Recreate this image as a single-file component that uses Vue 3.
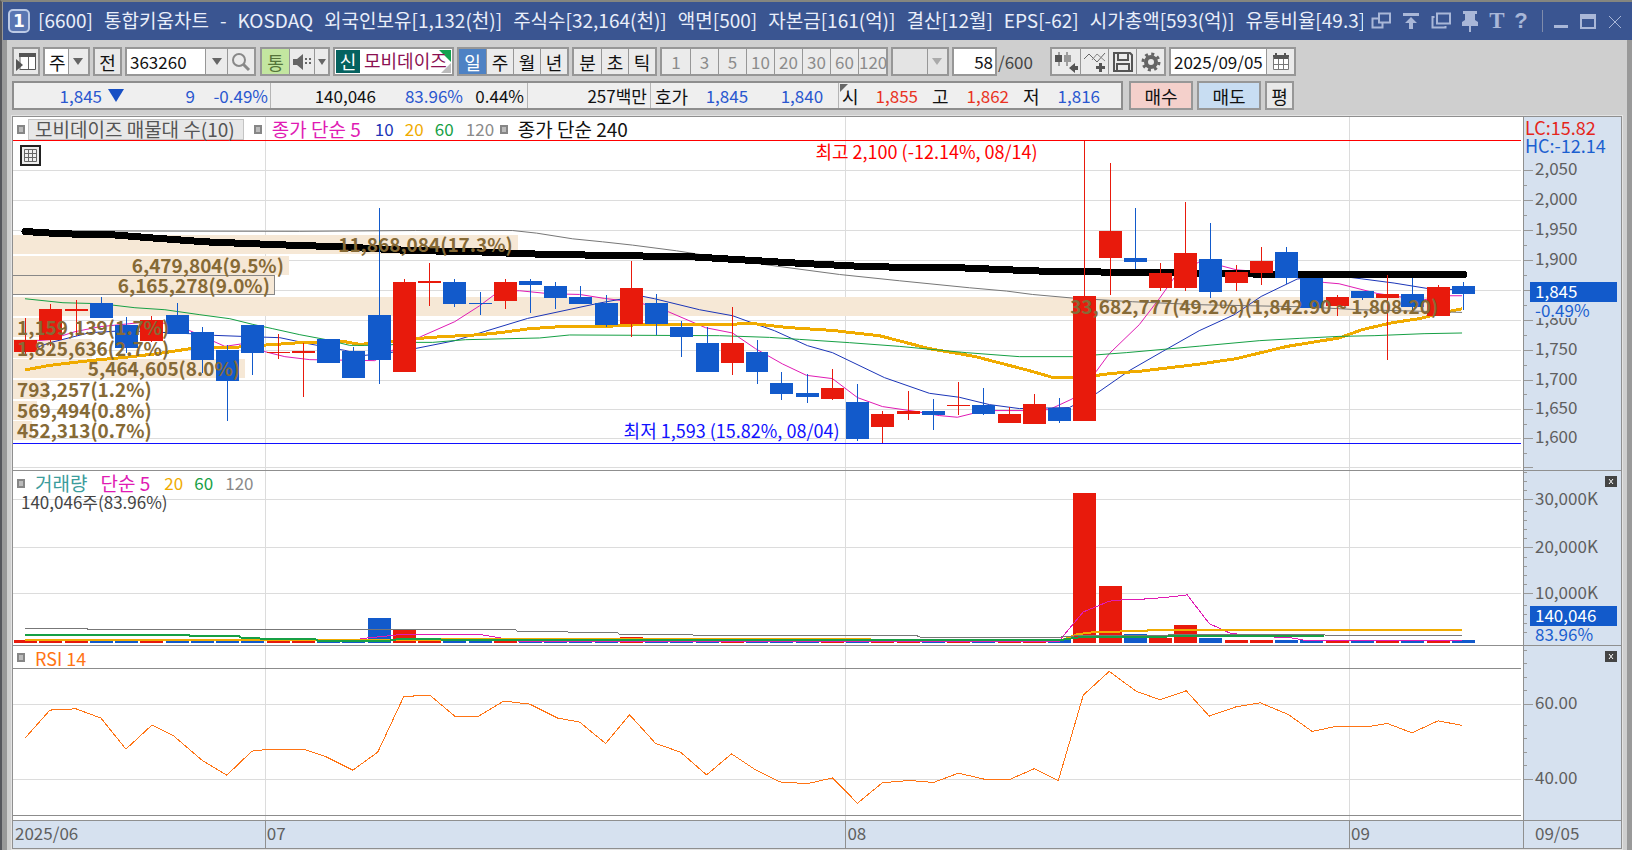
<script setup>
const X0 = 13
const W = 1511
const STEP = 25.24

const titleParts = [
  '[6600]', '통합키움차트', '-', 'KOSDAQ', '외국인보유[1,132(천)]', '주식수[32,164(천)]', '액면[500]',
  '자본금[161(억)]', '결산[12월]', 'EPS[-62]', '시가총액[593(억)]', '유통비율[49.3]'
]
const periods = ['일', '주', '월', '년']
const units = ['분', '초', '틱']
const minutes = [1, 3, 5, 10, 20, 30, 60, 120]

// [direction, body top, body bottom, high, low]
const candles = [
  ['r', 340, 352, 318, 356], ['r', 309, 340, 304, 346], ['r', 309, 311, 300, 336], ['b', 303, 318, 297, 318],
  ['b', 325, 348, 317, 353], ['r', 320, 341, 316, 342], ['b', 315, 334, 303, 334], ['b', 332, 360, 327, 373],
  ['b', 350, 381, 345, 421], ['b', 325, 353, 325, 375], ['r', 352, 353, 334, 359], ['r', 351, 353, 343, 397],
  ['b', 339, 363, 339, 363], ['b', 351, 378, 347, 378], ['b', 315, 360, 208, 384], ['r', 282, 372, 279, 372],
  ['r', 281, 283, 263, 306], ['b', 282, 304, 279, 307], ['b', 303, 304, 292, 315], ['r', 282, 301, 279, 309],
  ['b', 281, 285, 279, 313], ['b', 286, 298, 282, 309], ['b', 297, 304, 286, 304], ['b', 303, 325, 295, 327],
  ['r', 288, 324, 261, 337], ['b', 303, 324, 294, 335], ['b', 327, 337, 321, 357], ['b', 343, 372, 327, 372],
  ['r', 343, 363, 307, 375], ['b', 352, 372, 340, 384], ['b', 383, 394, 372, 400], ['b', 393, 397, 374, 403],
  ['r', 388, 399, 369, 400], ['b', 402, 439, 384, 441], ['r', 414, 427, 411, 443], ['r', 411, 414, 391, 420],
  ['b', 411, 415, 399, 430], ['r', 405, 406, 382, 415], ['b', 405, 414, 388, 415], ['r', 414, 423, 407, 423],
  ['r', 404, 424, 394, 424], ['b', 408, 421, 398, 423], ['r', 296, 421, 140, 421], ['r', 231, 258, 163, 295],
  ['b', 258, 262, 208, 269], ['r', 273, 288, 263, 291], ['r', 253, 288, 202, 291], ['b', 259, 292, 223, 298],
  ['r', 272, 283, 265, 291], ['r', 261, 273, 247, 285], ['b', 252, 278, 247, 284], ['b', 278, 308, 278, 308],
  ['r', 297, 306, 295, 316], ['b', 291, 298, 291, 300], ['r', 294, 298, 275, 360], ['b', 294, 307, 278, 313],
  ['r', 287, 316, 285, 316], ['b', 286, 294, 282, 310]
].map(([dir, top, bottom, high, low], i) => {
  const c = Math.round(25.2 + i * STEP)
  return { dir, top, bottom, high, low, c, x: c - 11 }
})

const volTop = { 14: 619, 15: 631, 24: 638, 42: 494, 43: 587, 44: 635, 45: 639, 46: 626, 47: 639, 48: 641, 49: 641, 50: 641 }
const volumes = candles.map((k, i) => ({ dir: k.dir, x: k.x, y: volTop[i] ?? 641 }))

const profile = [
  { w: 505, t: '11,868,084(17.3%)' }, { w: 276, t: '6,479,804(9.5%)' }, { w: 262, t: '6,165,278(9.0%)', current: true },
  { w: 1431, t: '33,682,777(49.2%)(1,842.90 ~ 1,808.20)' }, { w: 49, t: '1,159,139(1.7%)' }, { w: 79, t: '1,825,636(2.7%)' },
  { w: 232, t: '5,464,605(8.0%)' }, { w: 34, t: '793,257(1.2%)' }, { w: 24, t: '569,494(0.8%)' }, { w: 19, t: '452,313(0.7%)' }
].map((p, i) => ({ ...p, y: Math.round(235 + i * 20.7) }))

const ma = {
  ma120: '25,231 300,231.5 416,230.7 513,230.7 537,233.3 573,239 603,242 633,245.3 677,251 767,265 840,274.7 900,281 970,288 1007,291.3 1033,294.7 1073,298.3 1133,302 1200,305 1300,307 1360,310 1413,311.3 1463,312.7',
  ma240: '25,231.7 63,234 113,235 151,238 205,242 280,245 340,247 416,251 466,251.5 525,254 600,255.5 692,257 750,260.5 800,263.5 840,265.5 870,267 960,268 1020,270.5 1060,272 1150,272.5 1240,274 1300,275 1465,275',
  ma60: '25,299 63,303 101,304 135,308 165,310 200,315 230,319 253,324.7 273,329 300,335 325,339.7 350,345.7 385,345.7 416,342.7 433,342.7 466,340 540,338.3 570,335.3 720,336 770,337.7 800,339.7 850,343 900,346.7 967,353 1020,357 1073,357 1127,353 1200,346.5 1260,341 1300,338.7 1340,336.7 1375,336 1425,334 1463,333.3',
  ma20: '25,370.3 50,365.7 75,362.7 100,360 125,357.7 160,353.7 195,348.3 230,348 253,346.3 300,343 345,342 360,344.7 390,342.3 430,337.7 480,335 500,333 530,329 560,327 600,327 640,325 700,325 755,324 780,327 800,328.7 833,330.7 850,332.7 880,336 930,349 975,356.7 1030,371 1053,377.7 1082,378 1110,374 1140,371.7 1200,364.5 1237,359 1288,346.7 1340,338.3 1363,330 1393,323 1420,319 1450,311.7 1463,309',
  ma10: '25,352 50,343 75,336.7 90,333 125,331 190,334 215,335.7 250,337 280,338 310,344.3 345,350.7 365,355.7 390,353 415,349 455,341 480,333.3 528,318.7 600,303.3 640,296 655,299 700,310 733,316 755,324 775,331 808,346 833,353 885,378 930,393.7 960,397.7 990,405 1020,409 1070,408 1098,393.3 1130,371 1163,352 1200,331 1235,315 1262,296.7 1298,279.3 1330,275 1362,279 1395,283.3 1430,289 1463,290',
  ma5: '25,342 50,340 75,332 100,327 130,324 155,321 190,331 210,340 225,346.7 250,343 265,352 285,357 310,360 375,361 390,352 421,337 455,322 480,306 500,291 520,291 550,294 580,294.7 605,298.7 640,303 668,311.7 706,328 733,333.3 756,349 783,364.3 807,375.7 833,379 858,398 883,407 917,412 940,416 958,417.7 985,411 1025,411 1050,410 1073,399.3 1097,371.7 1110,354 1140,325 1160,299 1175,278 1200,262 1222,266 1237,270 1262,272 1290,276 1325,282.7 1340,284 1378,293.7 1400,297 1425,300 1450,296 1463,296'
}
const vma = {
  v120: '25,629.5 87,629.5 89,630.7 516,630.7 518,632 568,632.5 570,633.5 618,633.5 620,635 692,635 695,636.7 918,636.7 922,638.3 1055,638.3 1075,636.7 1150,636.5 1175,635.5 1325,635.5 1327,636.5 1463,636.5',
  v60: '25,635.3 188,635.3 190,636.7 239,637 241,638.3 265,639.5 316,640 318,641.3 390,641.3 400,639.7 440,640 445,641 1060,641 1080,638 1160,638 1175,636.5 1325,636.5',
  v20: '25,641.2 440,641.2 443,639.7 870,639.7 872,641 1062,641 1078,635 1098,632.5 1147,632 1150,630.5 1463,630.5',
  v5: '360,639.5 385,637 400,635.3 480,635.3 500,638.5 520,642 1060,642 1063,637.7 1084,612.7 1110,602 1123,600.7 1148,599.7 1168,598 1188,595.7 1210,624.3 1231,634 1254,636.7 1293,638.7 1307,641.3 1463,641.3'
}
const rsi = '25,738 50,710 76,708.7 101,718 126,749 152,725 174,736 202,760 227,775 252,751 265,749.5 305,749.5 325,756 353,770 378,752 404,696.5 430,695 455,716 479,716 504,701 530,704 558,718 580,722 606,743.3 630,714.7 656,743.3 681,752 707,774.7 732,753.7 755,769 780,781.7 808,783.5 833,777.7 858,803 883,782.5 910,780.3 934,782.3 959,773 985,779 1011,779 1035,768.5 1059,780.5 1084,695 1110,671.3 1137,691.3 1161,699.7 1187,690.7 1210,716 1237,706.7 1261,702.7 1289,714.3 1313,731.3 1335,726.7 1368,726.7 1388,723.3 1413,732.7 1439,720.7 1463,725.3'

const pane = {
  price: { y: 117, h: 354 },
  volume: { y: 472, h: 173 },
  rsi: { y: 646, h: 174 }
}
const priceGrid = [170, 200, 230, 260, 290, 320, 350, 380, 409, 438, 468]
const priceLabels = ['2,050', '2,000', '1,950', '1,900', '1,850', '1,800', '1,750', '1,700', '1,650', '1,600']
const priceMinor = [185, 215, 245, 275, 305, 335, 365, 394, 424, 453]
const volGrid = [500, 548, 594]
const volLabels = ['30,000K', '20,000K', '10,000K']
const volMinor = [473, 482, 491, 512, 521, 530, 539, 558, 567, 576, 585, 606, 615, 624, 633]
const rsiGrid = [704, 779]
const rsiLabels = ['60.00', '40.00']
const rsiMinor = [650, 663, 677, 690, 725, 738, 752, 765]
const months = [265, 846, 1350]
const monthLabels = [['07', 265], ['08', 846], ['09', 1350]]

const box = (p) => `${X0} ${p.y} ${W} ${p.h}`
const axisBox = (p) => `0 ${p.y} 97 ${p.h}`
const px = (x) => `${((x - X0) / W) * 100}%`
const py = (p, y) => `${((y - p.y) / p.h) * 100}%`
const labelStyle = (p) => ({
  top: py(pane.price, p.y + 9),
  right: p.w > 150 ? `${100 - (p.w / W) * 100}%` : 'auto',
  left: p.w > 150 ? 'auto' : '0'
})
</script>

<template>
  <div class="window">
    <header class="titlebar">
      <span class="badge">1</span>
      <h1 class="title"><span v-for="t in titleParts" :key="t">{{ t }}</span></h1>
      <div class="win-tools">
        <button type="button" aria-label="창 연결"><svg width="20" height="20"><path d="M8 2.5h11v9H8z M8 7.500H1.500v9h10V12" /></svg></button>
        <button type="button" aria-label="맨 위로"><svg width="18" height="20"><path class="fill" d="M1 2h16v3H1zM9 6l6 6h-4v6H7v-6H3z" /></svg></button>
        <button type="button" aria-label="창 복사"><svg width="20" height="20"><path d="M6 2.500h13v10H6z M3.500 6H1.500v10.500h13V15" /></svg></button>
        <button type="button" aria-label="고정"><svg width="18" height="22"><path class="fill" d="M2 1h14v3h-2v6l3 2v4H1v-4l3-2V4H2zM8 15h2v7H8z" /></svg></button>
        <button type="button" aria-label="글꼴" class="serif">T</button>
        <button type="button" aria-label="도움말" class="help">?</button>
        <i class="bar"></i>
        <button type="button" aria-label="최소화"><svg width="16" height="20"><path class="fill" d="M1 14h14v3H1z" /></svg></button>
        <button type="button" aria-label="최대화"><svg width="18" height="20"><path d="M2 4h14v13H2z" /><path class="fill" d="M1 3h16v5H1z" /></svg></button>
        <button type="button" aria-label="닫기"><svg width="14" height="20"><path class="thin" d="M1 5l12 12M13 5L1 17" /></svg></button>
      </div>
    </header>

    <div class="client">
      <div class="toolbar">
        <button type="button" class="btn w28" aria-label="패널 열기"><svg width="22" height="20"><path fill="#fff" d="M5 5h15v13H5z" /><path d="M5 17.500h15.500V2" fill="none" stroke="#555" /><path d="M5 4v14M13.500 4v13" stroke="#666" /><path fill="#555" d="M4 1h17v4H4zM1 7l7 6-7 6z" /></svg></button>
        <label class="combo w47"><select aria-label="종목 구분"><option>주</option></select><span class="arrow"></span></label>
        <button type="button" class="btn w29">전</button>
        <div class="group">
          <input class="code" aria-label="종목코드" value="363260" />
          <button type="button" class="cell w22" aria-label="최근 종목"><i class="tri"></i></button>
          <button type="button" class="cell w27" aria-label="종목 검색"><svg width="20" height="20"><circle cx="8" cy="8" r="6" fill="none" stroke="#888" stroke-width="2" /><path d="M12 12l6 6" stroke="#888" stroke-width="3" /></svg></button>
        </div>
        <div class="group speaker">
          <button type="button" class="cell green w27">통</button>
          <button type="button" class="cell w25" aria-label="소리"><svg width="20" height="20"><path fill="#666" d="M1 7h4l6-5v16l-6-5H1z" /><path stroke="#666" stroke-width="2" stroke-dasharray="2 2" d="M14 6v8M18 6v8" /></svg></button>
          <button type="button" class="cell w14" aria-label="소리 설정"><i class="tri small"></i></button>
        </div>
        <div class="group stock"><span class="new">신</span><span class="name">모비데이즈</span></div>
        <div class="group"><button v-for="(p, i) in periods" :key="p" type="button" class="cell w27" :class="{ on: i === 0 }">{{ p }}</button></div>
        <div class="group"><button v-for="p in units" :key="p" type="button" class="cell w27">{{ p }}</button></div>
        <div class="group mins"><button v-for="m in minutes" :key="m" type="button" class="cell w28 dim">{{ m }}</button></div>
        <label class="combo w58 off"><select aria-label="분 입력" disabled><option></option></select><span class="arrow"></span></label>
        <div class="count"><input id="bars" value="58" /><label for="bars">/600</label></div>
        <div class="group icons">
          <button type="button" class="cell w28" aria-label="봉 추가"><svg width="24" height="22"><path stroke="#555" d="M5 1v14M13 1v14" /><path fill="#555" d="M1 4h7v7H1zM15 17l6-5v3h3v4h-3v3z" /><path fill="#999" d="M10 4h7v7h-7z" /></svg></button>
          <button type="button" class="cell w28" aria-label="지표 추가"><svg width="24" height="22"><path fill="none" stroke="#666" d="M1 8l5-5 8 8 8-9" /><path fill="none" stroke="#888" d="M9 9l5-6 8 7" /><path fill="#555" d="M16 12h3v3h3v3h-3v3h-3v-3h-3v-3h3z" /></svg></button>
          <button type="button" class="cell w28" aria-label="저장"><svg width="22" height="22"><path fill="none" stroke="#555" stroke-width="2" d="M2 2h16l2 2v16H2zM6 2v7h10V2M5 20v-7h12v7" /></svg></button>
          <button type="button" class="cell w28" aria-label="설정"><svg width="20" height="20"><circle cx="10" cy="10" r="5" fill="none" stroke="#666" stroke-width="4" /><circle cx="10" cy="10" r="8" fill="none" stroke="#666" stroke-width="3" stroke-dasharray="3 3.280" /></svg></button>
        </div>
        <div class="group">
          <input class="date" aria-label="조회 일자" value="2025/09/05" />
          <button type="button" class="cell w28" aria-label="달력"><svg width="18" height="18"><path fill="#fff" d="M1 4h16v13H1z" /><path fill="#555" d="M1 2h16v4H1zM3 0h2v3H3zM12 0h2v3h-2z" /><path fill="none" stroke="#777" d="M1.500 4v12.500h15V4M6.500 6v10M11.500 6v10M1 11.500h16" /></svg></button>
        </div>
      </div>

      <div class="quote">
        <div class="strip">
          <div class="sec s1"><b class="blue c1">1,845</b><i class="down"></i><b class="blue c2">9</b><b class="blue c3">-0.49%</b></div>
          <div class="sec s2"><b class="c4">140,046</b><b class="blue c5">83.96%</b><b class="c6">0.44%</b></div>
          <div class="sec s3"><b>257백만</b></div>
          <div class="sec s4"><span>호가</span><b class="blue c7">1,845</b><b class="blue c8">1,840</b></div>
          <div class="sec s5"><span class="open">시</span><b class="red c7">1,855</b><span class="lbl">고</span><b class="red c9">1,862</b><span class="lbl">저</span><b class="blue c7">1,816</b></div>
        </div>
        <button type="button" class="btn buy">매수</button>
        <button type="button" class="btn sell">매도</button>
        <button type="button" class="btn w29">평</button>
      </div>

      <main class="chart">
        <section class="pane price">
          <div class="plot">
            <svg class="fit crisp" :viewBox="box(pane.price)" preserveAspectRatio="none" aria-hidden="true">
              <rect v-for="y in priceGrid" :key="y" class="grid" :x="X0" :y="y" width="1509" height="1" />
              <rect v-for="x in months" :key="x" class="grid" :x="x" y="117" width="1" height="355" />
              <rect v-for="p in profile" :key="p.y" :class="p.current ? 'prof cur' : 'prof'" :x="p.current ? X0 - 2 : X0" :y="p.y" :width="p.current ? p.w + 2 : p.w" height="19" />
              <polyline class="ln ma5" :points="ma.ma5" />
              <polyline class="ln ma10" :points="ma.ma10" />
              <polyline class="ln gold wide" :points="ma.ma20" />
              <polyline class="ln green-l" :points="ma.ma60" />
              <polyline class="ln gray" :points="ma.ma120" />
              <polyline class="ln black" :points="ma.ma240" />
              <g v-for="k in candles" :key="k.c" :class="k.dir">
                <rect :x="k.c" :y="k.high" width="1" :height="k.low - k.high" />
                <rect :x="k.x" :y="k.top" width="23" :height="k.bottom - k.top" />
              </g>
              <rect class="hi" :x="X0" y="140" width="1509" height="1" />
              <rect class="lo" :x="X0" y="443" width="1509" height="1" />
            </svg>
            <span v-for="p in profile" :key="p.t" class="prof-label" :style="labelStyle(p)">{{ p.t }}</span>
            <span class="note hi-note" :style="{ left: px(816), top: py(pane.price, 151) }">최고 2,100 (-12.14%, 08/14)</span>
            <span class="note lo-note" :style="{ left: px(624), top: py(pane.price, 430) }">최저 1,593 (15.82%, 08/04)</span>
            <div class="legend">
              <i class="sq"></i><span class="tag">모비데이즈 매물대 수(10)</span><i class="sq"></i>
              <span class="m5">종가 단순 5</span><span class="num m10">10</span><span class="num m20">20</span><span class="num m60">60</span><span class="num m120">120</span>
              <i class="sq"></i><span class="m240">종가 단순 240</span>
            </div>
            <button type="button" class="table-btn" aria-label="데이터 표"><svg width="21" height="21"><path fill="#eee" stroke="#222" stroke-width="2" d="M1 1h19v19H1z" /><path fill="none" stroke="#666" d="M4.500 4.500h12v12h-12zM8.500 4v13M12.500 4v13M4 8.500h13M4 12.500h13" /></svg></button>
          </div>
          <div class="axis">
            <svg class="fit crisp" :viewBox="axisBox(pane.price)" preserveAspectRatio="none" aria-hidden="true">
              <rect v-for="y in priceGrid" :key="y" x="0" :y="y" width="9" height="1" /><rect v-for="y in priceMinor" :key="y" x="0" :y="y" width="3" height="1" />
            </svg>
            <span v-for="(t, i) in priceLabels" :key="t" class="tick" :style="{ top: py(pane.price, priceGrid[i] - 2) }">{{ t }}</span>
            <span class="corner redtext" :style="{ top: py(pane.price, 127) }">LC:15.82</span>
            <span class="corner bluetext" :style="{ top: py(pane.price, 145) }">HC:-12.14</span>
            <span class="mark" :style="{ top: py(pane.price, 292) }">1,845</span>
            <span class="rate" :style="{ top: py(pane.price, 310) }">-0.49%</span>
          </div>
        </section>

        <section class="pane volume">
          <div class="plot">
            <svg class="fit crisp" :viewBox="box(pane.volume)" preserveAspectRatio="none" aria-hidden="true">
              <rect v-for="y in volGrid" :key="y" class="grid" :x="X0" :y="y" width="1509" height="1" />
              <rect v-for="x in months" :key="x" class="grid" :x="x" y="472" width="1" height="174" />
              <rect v-for="v in volumes" :key="v.x" :class="v.dir" :x="v.x" :y="v.y" width="23" :height="644 - v.y" />
              <polyline class="ln ma5" :points="vma.v5" />
              <polyline class="ln gold" :points="vma.v20" />
              <polyline class="ln green-l" :points="vma.v60" />
              <polyline class="ln gray" :points="vma.v120" />
            </svg>
            <div class="legend vol"><i class="sq"></i><span class="teal">거래량</span><span class="m5">단순 5</span><span class="num m20">20</span><span class="num m60">60</span><span class="num m120">120</span></div>
            <p class="vol-text">140,046주(83.96%)</p>
          </div>
          <div class="axis">
            <svg class="fit crisp" :viewBox="axisBox(pane.volume)" preserveAspectRatio="none" aria-hidden="true">
              <rect v-for="y in volGrid" :key="y" x="0" :y="y" width="9" height="1" /><rect v-for="y in volMinor" :key="y" x="0" :y="y" width="3" height="1" />
            </svg>
            <span v-for="(t, i) in volLabels" :key="t" class="tick" :style="{ top: py(pane.volume, volGrid[i] - 2) }">{{ t }}</span>
            <span class="mark" :style="{ top: py(pane.volume, 616) }">140,046</span>
            <span class="rate" :style="{ top: py(pane.volume, 634) }">83.96%</span>
            <button type="button" class="close" aria-label="거래량 닫기"><svg width="12" height="11"><path d="M4 3l4 5M8 3L4 8" stroke="#fff" /></svg></button>
          </div>
        </section>

        <section class="pane rsi">
          <div class="plot">
            <svg class="fit crisp" :viewBox="box(pane.rsi)" preserveAspectRatio="none" aria-hidden="true">
              <rect v-for="y in rsiGrid" :key="y" class="grid" :x="X0" :y="y" width="1509" height="1" />
              <rect v-for="x in months" :key="x" class="grid" :x="x" y="646" width="1" height="175" />
              <rect class="bound" :x="X0" y="668" width="1509" height="1" /><rect class="bound" :x="X0" y="815" width="1509" height="1" />
              <polyline class="ln orange" :points="rsi" />
            </svg>
            <div class="legend"><i class="sq"></i><span class="rsi-name">RSI 14</span></div>
          </div>
          <div class="axis">
            <svg class="fit crisp" :viewBox="axisBox(pane.rsi)" preserveAspectRatio="none" aria-hidden="true">
              <rect v-for="y in rsiGrid" :key="y" x="0" :y="y" width="9" height="1" /><rect v-for="y in rsiMinor" :key="y" x="0" :y="y" width="3" height="1" />
            </svg>
            <span v-for="(t, i) in rsiLabels" :key="t" class="tick" :style="{ top: py(pane.rsi, rsiGrid[i] - 2) }">{{ t }}</span>
            <button type="button" class="close" aria-label="RSI 닫기"><svg width="12" height="11"><path d="M4 3l4 5M8 3L4 8" stroke="#fff" /></svg></button>
          </div>
        </section>

        <footer class="dates">
          <div class="months">
            <span class="first">2025/06</span>
            <span v-for="m in monthLabels" :key="m[0]" class="month" :style="{ left: px(m[1]) }">{{ m[0] }}</span>
          </div>
          <div class="today">09/05</div>
        </footer>
      </main>
    </div>
  </div>
</template>

<style>
body { background: #999; }
</style>

<style scoped>
.window, .window * { box-sizing: border-box; }
.window {
  min-height: 100vh;
  display: flex;
  flex-direction: column;
  border-top: 2px solid #85867f;
  border-left: 2px solid #55565c;
  background: #999;
  color: #111;
  font: 18px/20px "Noto Sans CJK KR", sans-serif;
}
button, input, select { font: inherit; color: inherit; margin: 0; padding: 0; border: 0; background: none; border-radius: 0; }
svg { display: block; }

.titlebar { display: flex; align-items: center; height: 38px; margin-left: 1px; padding: 0 8px 0 5px; background: #3a5591; color: #e9eefa; }
.badge { flex: none; width: 22px; height: 24px; border: 2px solid #bccae6; border-radius: 5px; background: #5a76b2; text-align: center; font: bold 17px/20px "DejaVu Sans", sans-serif; color: #fff; }
.title { flex: 1; display: flex; gap: 11px; min-width: 0; margin: 0 3px 2px 8px; overflow: hidden; white-space: nowrap; font-size: 19px; font-weight: normal; line-height: 32px; }
.title span { flex: none; }
.win-tools { flex: none; display: grid; grid-template-columns: 30px 30px 30px 28px 26px 22px 20px 18px 36px 18px; align-items: center; justify-items: center; color: #a9b7d8; }
.win-tools path { fill: none; stroke: #a9b7d8; stroke-width: 2; }
.win-tools .fill { fill: #a9b7d8; stroke: none; }
.win-tools .thin { stroke-width: 1; }
.serif { font: bold 23px/24px "Liberation Serif", serif; }
.help { font: bold 22px/24px "Liberation Sans", sans-serif; }
.bar { width: 1px; height: 22px; background: #7f8cab; }

.client { flex: 1; display: flex; flex-direction: column; margin: 0 5px 0 5px; padding: 7px 5px 1px; background: #cfcfcf; }
.toolbar { display: flex; align-items: stretch; gap: 3px; height: 29px; }
.btn, .group, .combo { flex: none; border: 2px solid #979797; background: #e9e9e9; }
.btn { display: grid; place-items: center; }
.group { display: flex; }
.cell { display: grid; place-items: center; border-left: 1px solid #979797; background: #ebebeb; }
.cell:first-child { border-left: 0; }
.w14 { width: 14px; }
.w22 { width: 22px; }
.w25 { width: 25px; }
.w27 { width: 27px; }
.w28 { width: 28px; }
.w29 { width: 29px; }
.w47 { width: 47px; }
.w58 { width: 58px; }
.on { background: #4e82c4; color: #fff; }
.dim { color: #8b8b8b; font-size: 17px; }
.green { background: #c3e6a0; color: #55753b; }
.combo { display: flex; position: relative; background: #fff; }
.combo select { flex: 1; width: 100%; appearance: none; padding-left: 4px; outline: 0; opacity: 1; }
.arrow { position: absolute; top: 0; right: 0; bottom: 0; width: 20px; border-left: 1px solid #979797; background: #ebebeb; }
.arrow::after, .tri { content: ""; display: block; width: 0; border: 5px solid transparent; border-top: 7px solid #666; border-bottom: 0; }
.arrow::after { margin: 9px 0 0 4px; }
.tri.small { border-width: 6px 4px 0; }
.off { background: #e4e4e4; }
.off .arrow { background: #e4e4e4; }
.off .arrow::after { border-top-color: #aaa; }
.code { width: 78px; padding-left: 3px; background: #fff; font-size: 17px; }
.speaker { margin-left: 1px; background: #ebebeb; }
.stock { position: relative; width: 121px; background: #fff; overflow: hidden; }
.stock::before { content: ""; position: absolute; top: 1px; right: 1px; border: 6px solid #12a350; border-left-color: transparent; border-bottom-color: transparent; }
.stock::after { content: ""; position: absolute; bottom: 1px; right: 1px; border: 5px solid #bbb; border-left-color: transparent; border-top-color: transparent; }
.new { width: 24px; margin: 1px; background: #056260; color: #fff; text-align: center; line-height: 23px; }
.name { position: relative; z-index: 1; padding-left: 3px; color: #8b1152; line-height: 23px; }
.count { display: flex; align-items: center; width: 95px; color: #444; font-size: 17px; }
.count input { width: 45px; height: 29px; padding-right: 2px; border: 2px solid #979797; background: #fff; text-align: right; color: #111; }
.count label { padding-left: 1px; }
.date { width: 95px; padding-left: 3px; background: #fff; font-size: 17px; }

.quote { display: flex; height: 29px; margin-top: 5px; gap: 4px; }
.quote b { font-weight: normal; text-align: right; font-size: 17px; }
.strip { flex: none; display: flex; width: 1111px; margin-right: 2px; border: 2px solid #8e8e8e; background: #efefef; }
.sec { display: flex; align-items: center; border-right: 1px solid #b5b5b5; }
.sec:last-child { border-right: 0; }
.s1 { width: 257px; } .s2 { width: 257px; } .s3 { width: 123px; justify-content: flex-end; padding-right: 3px; }
.s4 { width: 188px; padding-left: 4px; } .s5 { flex: 1; position: relative; padding-left: 3px; }
.s5::before { content: ""; position: absolute; top: 1px; left: 1px; border: 4px solid #666; border-right-color: transparent; border-bottom-color: transparent; }
.c1 { width: 88px; } .c2 { width: 71px; } .c3 { width: 73px; }
.c4 { width: 105px; } .c5 { width: 87px; } .c6 { width: 61px; }
.c7 { width: 60px; } .c8 { width: 75px; } .c9 { width: 60px; }
.open { width: 16px; } .lbl { width: 31px; padding-left: 14px; }
.down { margin-left: 6px; border: 8px solid transparent; border-top: 13px solid #174fc4; border-bottom: 0; }
.blue { color: #2a57cf; } .red { color: #e93323; }
.buy { width: 64px; background: #f4d0cb; }
.sell { width: 64px; background: #c8ddf2; }

.chart { flex: 1; display: flex; flex-direction: column; min-height: 600px; margin-top: 6px; border: 1px solid #8f8f8f; outline: 1px solid #e3e3e3; background: #fff; }
.pane { display: flex; position: relative; border-bottom: 1px solid #8f8f8f; }
.price { flex: 355 1 0; } .volume { flex: 174 1 0; } .rsi { flex: 175 1 0; }
.plot { flex: 1; position: relative; min-width: 0; overflow: hidden; }
.axis { flex: none; position: relative; width: 98px; border-left: 1px solid #8f8f8f; background: #d6e1ef; color: #5f5f5f; font-size: 17px; }
.axis rect { fill: #999; }
.fit { position: absolute; inset: 0; width: 100%; height: 100%; }
.crisp { shape-rendering: crispEdges; }
.grid { fill: #dcdcdc; }
.prof { fill: #f6e8d6; }
.cur { stroke: #888; }
.ln { fill: none; stroke-width: 1; stroke-linejoin: round; vector-effect: non-scaling-stroke; }
.ma5 { stroke: #e01bb4; }
.ma10 { stroke: #1b35b8; }
.gold { stroke: #f0ab00; stroke-width: 2; }
.wide { stroke-width: 3; }
.green-l { stroke: #16a045; }
.volume .green-l { stroke-width: 2; }
.gray { stroke: #777; }
.black { stroke: #000; stroke-width: 7; stroke-linecap: round; }
.orange { stroke: #ff7414; }
.r { fill: #e81a0c; } .b { fill: #125acb; }
.hi { fill: #f00; } .lo { fill: #11f; }
.bound { fill: #8c8c8c; }
.prof-label, .note, .tick, .corner, .mark, .rate { position: absolute; transform: translateY(-50%); white-space: nowrap; }
.prof-label { padding: 0 5px 0 4px; color: #866a36; font-size: 19px; font-weight: bold; }
.hi-note { color: #f00; } .lo-note { color: #11f; }
.legend { position: relative; display: flex; align-items: center; height: 24px; padding-left: 4px; white-space: nowrap; font-size: 19px; }
.legend .sq { flex: none; width: 8px; height: 9px; border: 2px solid #868686; background: #bbb; }
.tag { margin: 0 10px 0 3px; padding: 0 8px 0 6px; height: 21px; border: 1px solid #c4c4c4; background: #e8e8e8; color: #555; line-height: 18px; }
.num { font-size: 17px; }
.m5 { color: #e01bb4; padding: 0 14px 0 10px; }
.m10 { color: #1b35b8; width: 30px; } .m20 { color: #f0ab00; width: 30px; } .m60 { color: #16a045; width: 31px; } .m120 { color: #8a8a8a; width: 34px; }
.m240 { padding-left: 10px; }
.teal { color: #3b9c9c; padding: 0 3px 0 10px; }
.rsi-name { color: #ff7414; padding-left: 10px; font-size: 18px; }
.vol-text { position: relative; margin: -3px 0 0 8px; color: #444; font-size: 17px; }
.table-btn { position: relative; display: block; margin: 4px 0 0 7px; }
.tick { left: 11px; }
.corner { left: 1px; font-size: 18px; }
.redtext { color: #e5261b; } .bluetext { color: #1b5fd0; }
.mark { left: 6px; width: 87px; padding: 0 0 2px 5px; background: #125acb; color: #fff; line-height: 18px; z-index: 1; }
.rate { left: 6px; width: 87px; padding-left: 5px; background: #d6e1ef; color: #1b5fd0; line-height: 16px; }
.close { position: absolute; top: 5px; right: 4px; background: #444; }
.dates { display: flex; height: 27px; background: #d6e1ef; color: #5f5f5f; font-size: 17px; line-height: 24px; }
.months { flex: 1; position: relative; }
.first { padding-left: 2px; }
.month { position: absolute; top: 0; bottom: 0; padding-left: 1px; border-left: 1px solid #8f8f8f; }
.today { width: 98px; padding-left: 11px; border-left: 1px solid #8f8f8f; }
</style>
